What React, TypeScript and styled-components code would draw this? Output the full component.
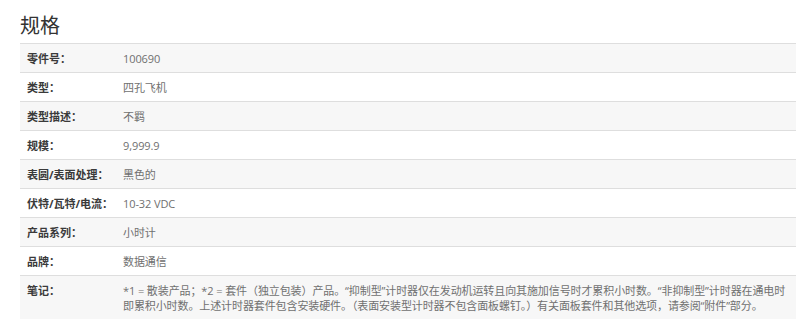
import { createGlobalStyle } from "styled-components";
import styled from "styled-components";

const GlobalStyle = createGlobalStyle`
  html, body {
    margin: 0;
    padding: 0;
    background: #fff;
  }
  body {
    font-family: "Open Sans", "Noto Sans CJK SC", sans-serif;
    color: #333;
  }
`;

const Section = styled.section`
  padding: 12px 4px 0 20px;
`;

const Title = styled.h2`
  margin: 0 0 3px;
  font-size: 20px;
  line-height: 28px;
  font-weight: 400;
  color: #333;
`;

const Table = styled.table`
  width: 100%;
  border-collapse: collapse;
  font-size: 11px;
  line-height: 15px;
`;

const Row = styled.tr<{ $striped: boolean }>`
  background: ${(p) => (p.$striped ? "#f7f7f7" : "#fff")};
  border-top: 1px solid #dedede;
`;

const Label = styled.th`
  width: 89px;
  padding: 7px 0 6px 7px;
  text-align: left;
  vertical-align: top;
  white-space: nowrap;
  font-weight: 700;
  color: #3a3a3a;
`;

const Value = styled.td`
  padding: 7px 2px 6px 7px;
  vertical-align: top;
  letter-spacing: -0.1px;
  color: #707070;
`;

const specs: [string, string][] = [
  ["零件号：", "100690"],
  ["类型：", "四孔飞机"],
  ["类型描述：", "不羁"],
  ["规模：", "9,999.9"],
  ["表圆/表面处理：", "黑色的"],
  ["伏特/瓦特/电流：", "10-32 VDC"],
  ["产品系列：", "小时计"],
  ["品牌：", "数据通信"],
  [
    "笔记：",
    "*1 = 散装产品；*2 = 套件（独立包装）产品。“抑制型”计时器仅在发动机运转且向其施加信号时才累积小时数。“非抑制型”计时器在通电时即累积小时数。上述计时器套件包含安装硬件。（表面安装型计时器不包含面板螺钉。）有关面板套件和其他选项，请参阅“附件”部分。",
  ],
];

export default function App() {
  return (
    <>
      <GlobalStyle />
      <Section>
        <Title>规格</Title>
        <Table>
          <tbody>
            {specs.map(([label, value], i) => (
              <Row key={label} $striped={i % 2 === 0}>
                <Label>{label}</Label>
                <Value>{value}</Value>
              </Row>
            ))}
          </tbody>
        </Table>
      </Section>
    </>
  );
}
